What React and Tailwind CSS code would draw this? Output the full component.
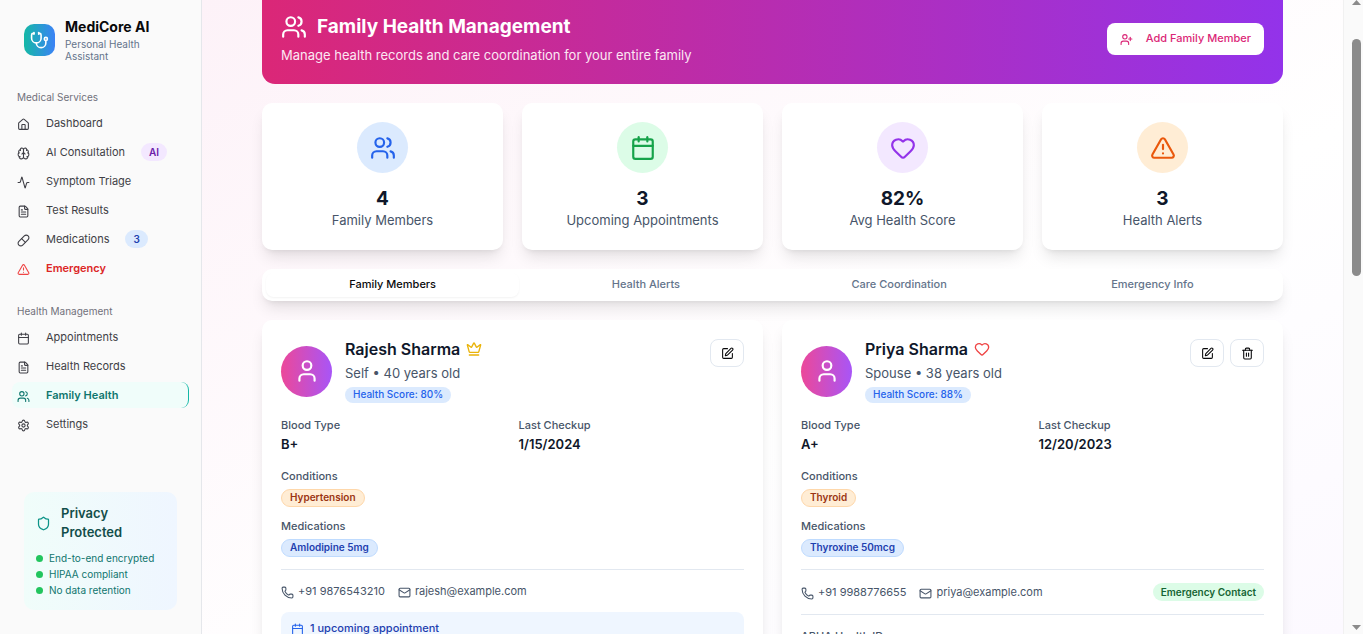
import {
  Activity,
  Brain,
  Calendar,
  Crown,
  FileText,
  Heart,
  House,
  Mail,
  Phone,
  Pill,
  Settings,
  Shield,
  SquarePen,
  Stethoscope,
  Trash2,
  TriangleAlert,
  User,
  UserPlus,
  Users,
} from 'lucide-react';

const services = [
  { label: 'Dashboard', icon: House },
  { label: 'AI Consultation', icon: Brain, badge: 'AI', badgeClass: 'bg-[#f3e8ff] text-[#6b21a8]' },
  { label: 'Symptom Triage', icon: Activity },
  { label: 'Test Results', icon: FileText },
  { label: 'Medications', icon: Pill, badge: '3', badgeClass: 'bg-[#dbeafe] text-[#1e40af]' },
  { label: 'Emergency', icon: TriangleAlert, danger: true },
];

const management = [
  { label: 'Appointments', icon: Calendar },
  { label: 'Health Records', icon: FileText },
  { label: 'Family Health', icon: Users, active: true },
  { label: 'Settings', icon: Settings },
];

const stats = [
  { value: '4', label: 'Family Members', icon: Users, color: 'bg-[#dbeafe] text-[#2563eb]' },
  { value: '3', label: 'Upcoming Appointments', icon: Calendar, color: 'bg-[#dcfce7] text-[#16a34a]' },
  { value: '82%', label: 'Avg Health Score', icon: Heart, color: 'bg-[#f3e8ff] text-[#9333ea]' },
  { value: '3', label: 'Health Alerts', icon: TriangleAlert, color: 'bg-[#ffedd5] text-[#ea580c]' },
];

const tabs = ['Family Members', 'Health Alerts', 'Care Coordination', 'Emergency Info'];

const members = [
  {
    name: 'Rajesh Sharma',
    mark: Crown,
    markClass: 'text-[#eab308]',
    relation: 'Self • 40 years old',
    score: '80%',
    blood: 'B+',
    checkup: '1/15/2024',
    condition: 'Hypertension',
    medication: 'Amlodipine 5mg',
    phone: '+91 9876543210',
    email: 'rajesh@example.com',
    appointments: '1 upcoming appointment',
  },
  {
    name: 'Priya Sharma',
    mark: Heart,
    markClass: 'text-[#ef4444]',
    relation: 'Spouse • 38 years old',
    score: '88%',
    blood: 'A+',
    checkup: '12/20/2023',
    condition: 'Thyroid',
    medication: 'Thyroxine 50mcg',
    phone: '+91 9988776655',
    email: 'priya@example.com',
    emergency: true,
    removable: true,
  },
];

const NavItem = ({ item }) => {
  const Icon = item.icon;
  let tone = 'text-[#3f3f46]';
  if (item.danger) tone = 'font-semibold text-[#dc2626]';
  if (item.active) tone = 'font-semibold text-[#0f766e] bg-[#f0fdfa] border-r border-[#14b8a6]';

  return (
    <li>
      <a href="#" className={`flex h-[26px] items-center rounded-lg pl-[5px] text-[11px] leading-4 ${tone}`}>
        <Icon className={`mt-[2px] mr-4 h-[13px] w-[13px] shrink-0 ${item.danger ? 'text-[#ef4444]' : ''}`} />
        <span>{item.label}</span>
        {item.badge && (
          <span className={`ml-4 rounded-full px-2 py-[2px] text-[10px] font-semibold leading-[14px] ${item.badgeClass}`}>
            {item.badge}
          </span>
        )}
      </a>
    </li>
  );
};

const NavGroup = ({ title, items }) => (
  <div>
    <h3 className="flex h-[25px] items-center pl-[5px] text-[10px] text-[#71717a]">{title}</h3>
    <ul className="flex flex-col gap-[3px]">
      {items.map((item) => (
        <NavItem key={item.label} item={item} />
      ))}
    </ul>
  </div>
);

const Sidebar = () => (
  <aside className="flex w-[202px] shrink-0 flex-col border-r border-[#e5e7eb] bg-[#fafafa] px-3">
    <div className="flex items-center gap-[10px] pt-[18px] pl-3">
      <div className="flex h-8 w-[31px] items-center justify-center rounded-[10px] bg-linear-to-r/srgb from-[#14b8a6] to-[#3b82f6]">
        <Stethoscope className="h-[19px] w-[19px] text-white" />
      </div>
      <div className="flex-1">
        <h2 className="text-[14px] font-bold leading-[18px] text-[#09090b]">MediCore AI</h2>
        <p className="mt-[2px] w-24 text-[10px] leading-3 text-[#64748b]">Personal Health Assistant</p>
      </div>
    </div>

    <nav className="mt-[23px] flex flex-col gap-[18px]">
      <NavGroup title="Medical Services" items={services} />
      <NavGroup title="Health Management" items={management} />
    </nav>

    <div className="mx-3 mt-auto mb-6 rounded-[10px] bg-linear-to-r/srgb from-[#f0fdfa] to-[#eff6ff] p-3">
      <div className="flex items-center gap-[10px]">
        <Shield className="h-[15px] w-[15px] shrink-0 text-[#0d9488]" />
        <h3 className="w-20 text-[13px] font-semibold leading-[19px] text-[#134e4a]">Privacy Protected</h3>
      </div>
      <ul className="mt-2 text-[10px] leading-4 text-[#0f766e]">
        {['End-to-end encrypted', 'HIPAA compliant', 'No data retention'].map((text) => (
          <li key={text} className="flex items-center gap-[6px]">
            <span className="h-[7px] w-[7px] rounded-full bg-[#22c55e]" />
            {text}
          </li>
        ))}
      </ul>
    </div>
  </aside>
);

const Banner = () => (
  <header className="flex h-[104px] items-center justify-between rounded-[13px] bg-linear-to-r/srgb from-[#db2777] to-[#9333ea] px-[19px]">
    <div className="pt-[15px]">
      <h1 className="flex items-center gap-[10px] text-[19px] font-bold leading-[26px] text-white">
        <Users className="h-[26px] w-[26px]" />
        Family Health Management
      </h1>
      <p className="mt-[5px] text-[13px] leading-5 text-[#fce7f3]">
        Manage health records and care coordination for your entire family
      </p>
    </div>
    <button className="mt-[14px] flex h-8 items-center gap-[13px] rounded-lg bg-white px-[13px] pb-[2px] text-[11px] font-medium text-[#db2777]">
      <UserPlus className="mt-[3px] h-[13px] w-[13px]" />
      Add Family Member
    </button>
  </header>
);

const StatCard = ({ stat }) => {
  const Icon = stat.icon;
  return (
    <div className="flex flex-col items-center rounded-[10px] bg-white pt-[19px] pb-[21px] shadow-lg">
      <div className={`flex h-[51px] w-[51px] items-center justify-center rounded-full ${stat.color}`}>
        <Icon className="h-[26px] w-[26px]" />
      </div>
      <p className="mt-[14px] text-[19px] font-bold leading-6 text-[#0f172a]">{stat.value}</p>
      <p className="text-[13px] leading-[18px] text-[#475569]">{stat.label}</p>
    </div>
  );
};

const IconButton = ({ icon: Icon, label }) => (
  <button
    aria-label={label}
    className="flex h-7 w-[34px] items-center justify-center rounded-lg border border-[#e2e8f0] bg-white text-[#09090b]"
  >
    <Icon className="h-[13px] w-[13px]" />
  </button>
);

const MemberCard = ({ member }) => {
  const Mark = member.mark;
  return (
    <article className="rounded-[10px] bg-white p-[19px] shadow-lg">
      <div className="flex items-start justify-between">
        <div className="flex items-center gap-[13px]">
          <div className="flex h-[51px] w-[51px] items-center justify-center rounded-full bg-linear-to-r/srgb from-[#ec4899] to-[#a855f7]">
            <User className="h-[26px] w-[26px] text-white" />
          </div>
          <div>
            <h3 className="flex items-center gap-[6px] text-[16px] font-semibold leading-5 text-[#0f172a]">
              {member.name}
              <Mark className={`h-4 w-4 ${member.markClass}`} />
            </h3>
            <p className="mt-1 text-[13px] leading-5 text-[#475569]">{member.relation}</p>
            <span className="mt-1 flex h-4 w-fit items-center rounded-full bg-[#dbeafe] px-2 pb-[2px] text-[10px] font-medium text-[#2563eb]">
              Health Score: {member.score}
            </span>
          </div>
        </div>
        <div className="flex gap-[6px]">
          <IconButton icon={SquarePen} label={`Edit ${member.name}`} />
          {member.removable && <IconButton icon={Trash2} label={`Remove ${member.name}`} />}
        </div>
      </div>

      <dl className="mt-[14px] grid grid-cols-2 gap-x-3 text-[11px] leading-4 text-[#475569]">
        <div>
          <dt className="font-medium">Blood Type</dt>
          <dd className="mt-px text-[13px] font-semibold leading-5 text-[#0f172a]">{member.blood}</dd>
        </div>
        <div>
          <dt className="font-medium">Last Checkup</dt>
          <dd className="mt-px text-[13px] font-semibold leading-5 text-[#0f172a]">{member.checkup}</dd>
        </div>
        <div className="col-span-2 mt-[14px]">
          <dt className="font-medium">Conditions</dt>
          <dd className="mt-[5px] flex h-[18px] w-fit items-center rounded-full border border-[#fed7aa] bg-[#ffedd5] px-2 pb-[2px] text-[10px] font-semibold text-[#9a3412]">
            {member.condition}
          </dd>
        </div>
        <div className="col-span-2 mt-[11px]">
          <dt className="font-medium">Medications</dt>
          <dd className="mt-[5px] flex h-[18px] w-fit items-center rounded-full border border-[#bfdbfe] bg-[#dbeafe] px-2 pb-[2px] text-[10px] font-semibold text-[#1e40af]">
            {member.medication}
          </dd>
        </div>
      </dl>

      <div className="mt-3 flex items-center justify-between border-t border-[#e2e8f0] pt-[13px]">
        <div className="flex items-center gap-[13px] text-[11px] leading-4 text-[#475569]">
          <span className="flex items-center gap-1">
            <Phone className="mt-[2px] h-[13px] w-[13px]" />
            {member.phone}
          </span>
          <span className="flex items-center gap-1">
            <Mail className="mt-[2px] h-[13px] w-[13px]" />
            {member.email}
          </span>
        </div>
        {member.emergency && (
          <span className="rounded-full bg-[#dcfce7] px-2 py-[2px] text-[10px] font-semibold leading-[14px] text-[#166534]">
            Emergency Contact
          </span>
        )}
      </div>

      {member.appointments && (
        <div className="mt-[13px] rounded-lg bg-[#eff6ff] px-[10px] py-2 text-[11px] font-medium leading-4 text-[#1e40af]">
          <p className="flex items-center gap-[6px]">
            <Calendar className="mt-[2px] h-[13px] w-[13px] text-[#2563eb]" />
            {member.appointments}
          </p>
        </div>
      )}
      {member.emergency && (
        <div className="mt-[13px] border-t border-[#e2e8f0] pt-[13px] text-[11px] font-medium leading-4 text-[#475569]">
          ABHA Health ID
        </div>
      )}
    </article>
  );
};

const Scrollbar = () => (
  <div aria-hidden="true" className="flex w-5 shrink-0 flex-col items-end border-l border-[#f1f1f1] bg-[#fafafa] pr-[2px] pb-1">
    <svg viewBox="0 0 9 5" className="h-[5px] w-[9px] fill-[#8b8b8b]">
      <path d="M4.500 0 9 5H0z" />
    </svg>
    <div className="mt-[34px] h-[237px] w-[9px] rounded-full bg-[#8b8b8b]" />
    <svg viewBox="0 0 9 5" className="mt-auto h-[5px] w-[9px] fill-[#8b8b8b]">
      <path d="M0 0h9L4.500 5z" />
    </svg>
  </div>
);

const App = () => {
  return (
    <div className="flex h-screen overflow-hidden font-['Inter',sans-serif]">
      <Sidebar />
      <main className="flex-1 overflow-hidden bg-linear-to-br/srgb from-[#fdf2f8] via-white via-60% to-[#fcf9ff]">
        <div className="mx-auto -mt-5 flex max-w-[1021px] flex-col gap-[19px]">
          <Banner />
          <section className="grid grid-cols-4 gap-[19px]">
            {stats.map((stat) => (
              <StatCard key={stat.label} stat={stat} />
            ))}
          </section>
          <div role="tablist" className="grid h-8 grid-cols-4 rounded-[10px] bg-white p-1 shadow-lg">
            {tabs.map((tab, i) => (
              <button
                key={tab}
                role="tab"
                aria-selected={i === 0}
                className={`rounded-lg pb-[2px] text-[11px] font-medium ${i === 0 ? 'text-[#09090b] shadow-xs' : 'text-[#64748b]'}`}
              >
                {tab}
              </button>
            ))}
          </div>
          <section className="grid grid-cols-2 items-start gap-[19px]">
            {members.map((member) => (
              <MemberCard key={member.name} member={member} />
            ))}
          </section>
        </div>
      </main>
      <Scrollbar />
    </div>
  );
};

export default App;
